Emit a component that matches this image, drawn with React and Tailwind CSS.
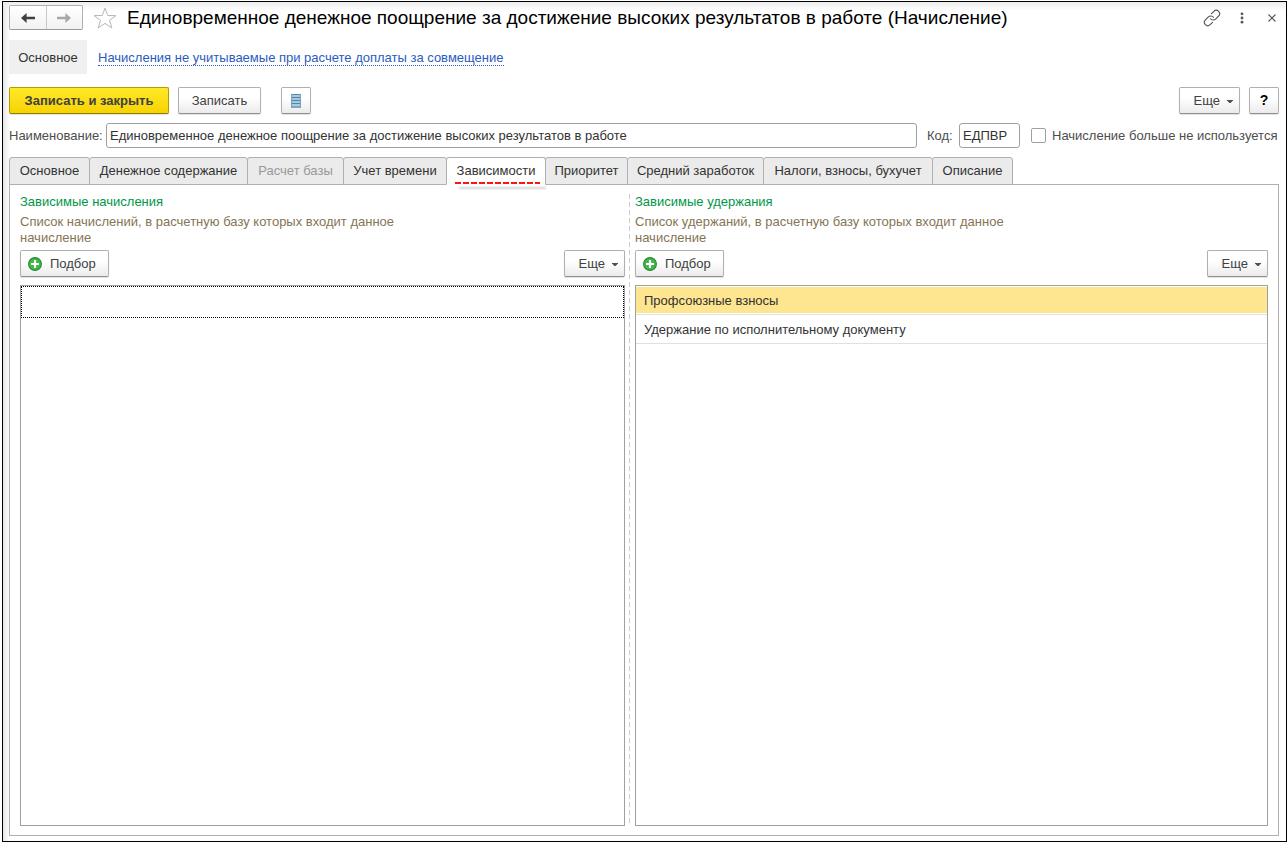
import { useState } from "react";

const buttonBase =
  "flex h-[27px] shrink-0 items-center rounded-[2px] border border-[#b0b0b0] border-b-[#8f8f8f] bg-linear-to-b from-white from-40% to-[#ebebeb] text-[13px] text-[#404040] shadow-[0_1px_1px_rgba(0,0,0,0.12)]";

const tabs = [
  { label: "Основное", width: "w-[81px]" },
  { label: "Денежное содержание", width: "w-[159px]" },
  { label: "Расчет базы", width: "w-[97px]", disabled: true },
  { label: "Учет времени", width: "w-[104px]" },
  { label: "Зависимости", width: "w-[100px]" },
  { label: "Приоритет", width: "w-[83px]" },
  { label: "Средний заработок", width: "w-[137px]" },
  { label: "Налоги, взносы, бухучет", width: "w-[170px]" },
  { label: "Описание", width: "w-[81px]" },
];

function Arrow({ className, flip }) {
  return (
    <svg viewBox="0 0 14 10" className={`h-[10px] w-[14px] ${className}`} aria-hidden="true">
      <path
        d="M0 5 L5.6 0 L5.6 3.8 L14 3.8 L14 6.2 L5.6 6.2 L5.6 10 Z"
        fill="currentColor"
        transform={flip ? "translate(14 0) scale(-1 1)" : undefined}
      />
    </svg>
  );
}

function MoreButton() {
  return (
    <button type="button" className={`${buttonBase} w-[61px] justify-end gap-[7px] pr-[6px]`}>
      Еще
      <svg viewBox="0 0 6 3" className="mt-px h-[3px] w-[6px]" aria-hidden="true">
        <path d="M0 0 H6 V0.6 L3.6 3 H2.4 L0 0.6 Z" fill="#505050" />
      </svg>
    </button>
  );
}

function PickButton() {
  return (
    <button type="button" className={`${buttonBase} w-[89px] gap-2 pl-[7px]`}>
      <svg viewBox="0 0 14 14" className="size-[14px]" aria-hidden="true">
        <circle cx="7" cy="7" r="6.4" fill="#43b649" stroke="#258a35" strokeWidth="1.1" />
        <path d="M7 3 V11 M3 7 H11" stroke="#fff" strokeWidth="2.1" />
      </svg>
      Подбор
    </button>
  );
}

function Section({ title, hint, children }) {
  return (
    <section className="flex min-w-0 flex-1 flex-col">
      <h2 className="leading-4 text-[#009646]">{title}</h2>
      <p className="mt-1 max-w-[400px] leading-4 text-[#857554]">{hint}</p>
      <div className="mt-1 mb-2 flex justify-between">
        <PickButton />
        <MoreButton />
      </div>
      <ul className="flex-1 border border-[#a0a0a0] bg-white">{children}</ul>
    </section>
  );
}

export default function App() {
  const [active, setActive] = useState(4);
  const [selected, setSelected] = useState(0);
  const [name, setName] = useState("Единовременное денежное поощрение за достижение высоких результатов в работе");
  const [code, setCode] = useState("ЕДПВР");
  const [unused, setUnused] = useState(false);

  return (
    <div className="flex min-h-screen flex-col bg-white pt-px pl-[2px] font-['Liberation_Sans',Arial,sans-serif] text-[13px] text-[#333]">
      <main className="flex flex-1 flex-col border border-black bg-linear-to-r from-[#e6e6e6] to-white to-[7px]">
        <div className="flex flex-1 flex-col bg-linear-to-b from-[#ededed] to-transparent to-[9px] pt-[3px] pr-[7px] pb-[5px] pl-[6px]">
          <header className="flex h-[25px] items-center">
            <div className="flex h-[25px] w-[74px] shrink-0 rounded-[2px] border border-[#b0b0b0] border-b-[#999] bg-linear-to-b from-white to-[#f2f2f2]">
              <button type="button" aria-label="Назад" className="flex flex-1 items-center justify-center border-r border-[#c8c8c8]">
                <Arrow className="text-[#404040]" />
              </button>
              <button type="button" aria-label="Вперед" className="flex flex-1 items-center justify-center">
                <Arrow flip className="text-[#a8a8a8]" />
              </button>
            </div>
            <button type="button" aria-label="Избранное" className="ml-[10px] shrink-0">
              <svg viewBox="0 0 24 22" className="h-[22px] w-6" aria-hidden="true">
                <path d="M12 1.2 L14.8 8.5 L23 8.6 L16.5 13.4 L18.9 21 L12 16.4 L5.1 21 L7.5 13.4 L1 8.6 L9.2 8.5 Z" fill="#fff" stroke="#b4b8bc" />
              </svg>
            </button>
            <h1 className="ml-[10px] flex-1 text-[19px] leading-6 whitespace-nowrap text-black">
              Единовременное денежное поощрение за достижение высоких результатов в работе (Начисление)
            </h1>
            <div className="flex items-center text-[#555]">
              <button type="button" aria-label="Ссылка">
                <svg viewBox="0 0 24 24" className="size-[18px]" fill="none" stroke="currentColor" strokeWidth="1.5" strokeLinecap="round" aria-hidden="true">
                  <path d="M10 13 a4.6 4.6 0 0 0 6.8 0.4 l4-4 a4.4 4.4 0 0 0 -6.3 -6.3 l-3.2 3.2" />
                  <path d="M14 11 a4.6 4.6 0 0 0 -6.8 -0.4 l-4 4 a4.4 4.4 0 0 0 6.3 6.3 l3.2 -3.2" />
                </svg>
              </button>
              <button type="button" aria-label="Меню" className="ml-[19px]">
                <svg viewBox="0 0 4 12" className="h-3 w-1" fill="currentColor" aria-hidden="true">
                  <circle cx="2" cy="1.8" r="1.4" />
                  <circle cx="2" cy="6" r="1.4" />
                  <circle cx="2" cy="10.2" r="1.4" />
                </svg>
              </button>
              <button type="button" aria-label="Закрыть" className="mr-[3px] ml-6">
                <svg viewBox="0 0 8 8" className="size-2" stroke="currentColor" strokeWidth="1.1" aria-hidden="true">
                  <path d="M0.5 0.5 L7.5 7.5 M7.5 0.5 L0.5 7.5" />
                </svg>
              </button>
            </div>
          </header>

          <nav className="mt-[10px] flex h-[34px] items-center gap-[11px]">
            <span className="flex h-full w-[78px] items-center justify-center bg-[#f0f0f0] pt-px">Основное</span>
            <a href="#related" className="mt-[2px] border-b border-dotted border-[#2a5bc0] leading-[14px] text-[#2a5bc0]">
              Начисления не учитываемые при расчете доплаты за совмещение
            </a>
          </nav>

          <div className="mt-[13px] flex">
            <button
              type="button"
              className="h-[27px] w-[160px] rounded-[2px] border border-[#b39b00] border-b-[#8f7c00] bg-linear-to-b from-[#ffe924] to-[#f7d300] text-[13px] font-bold text-[#404040] shadow-[0_1px_1px_rgba(0,0,0,0.12)]"
            >
              Записать и закрыть
            </button>
            <button type="button" className={`${buttonBase} ml-[9px] w-[83px] justify-center`}>
              Записать
            </button>
            <button type="button" aria-label="Список" className={`${buttonBase} ml-5 w-[30px] justify-center`}>
              <svg viewBox="0 0 10 14" className="h-[14px] w-[10px]" aria-hidden="true">
                <path d="M0 0 H10 V14 H0 Z" fill="#a9cbe2" />
                <path d="M0 0.5 H10 M0 3.5 H10 M0 6.5 H10 M0 9.5 H10 M0 13 H10" stroke="#5583a6" />
                <path d="M0.5 0 V14 M9.5 0 V14" stroke="#7ba3c0" />
              </svg>
            </button>
            <div className="ml-auto flex gap-[9px]">
              <MoreButton />
              <button type="button" className={`${buttonBase} w-[30px] justify-center text-[14px] font-bold text-black`}>
                ?
              </button>
            </div>
          </div>

          <div className="mt-[9px] flex h-[25px] items-center text-[#4d4d4d]">
            <label htmlFor="name" className="w-[97px] shrink-0">Наименование:</label>
            <input
              id="name"
              value={name}
              onChange={(e) => setName(e.target.value)}
              className="h-full min-w-0 flex-1 rounded-[3px] border border-[#a0a0a0] bg-white px-[3px] text-[#333] outline-none"
            />
            <label htmlFor="code" className="ml-[10px] w-8 shrink-0">Код:</label>
            <input
              id="code"
              value={code}
              onChange={(e) => setCode(e.target.value)}
              className="h-full w-[61px] rounded-[3px] border border-[#a0a0a0] bg-white px-[3px] text-[#333] outline-none"
            />
            <label className="ml-[11px] flex w-[248px] shrink-0 items-center gap-[6px] whitespace-nowrap">
              <input
                type="checkbox"
                checked={unused}
                onChange={(e) => setUnused(e.target.checked)}
                className="size-[15px] appearance-none rounded-[2px] border border-[#a0a0a0] bg-white checked:bg-[#666]"
              />
              Начисление больше не используется
            </label>
          </div>

          <div role="tablist" className="relative z-10 mt-[9px] -mb-px flex h-7">
            {tabs.map((tab, i) => (
              <button
                key={tab.label}
                type="button"
                role="tab"
                aria-selected={active === i}
                disabled={tab.disabled}
                onClick={() => setActive(i)}
                className={`relative -mr-px shrink-0 rounded-t-[3px] border border-[#b0b0b0] whitespace-nowrap ${tab.width} ${
                  active === i ? "border-b-white bg-white" : "bg-[#ebebeb]"
                } ${tab.disabled ? "text-[#999]" : "text-[#333]"}`}
              >
                {tab.label}
                {active === i && (
                  <svg viewBox="0 0 92 10" className="absolute top-[22px] left-2 h-[10px] w-[92px]" aria-hidden="true">
                    <path d="M5 8 H90" stroke="#f0f0f0" strokeWidth="4" strokeLinecap="round" />
                    <path d="M6 8 H89" stroke="#e2e2e2" strokeWidth="2" strokeLinecap="round" />
                    <path d="M0 3 H85" stroke="#ff1414" strokeWidth="2" strokeDasharray="6 2" />
                  </svg>
                )}
              </button>
            ))}
          </div>

          <div className="flex flex-1 border border-[#b0b0b0] bg-white px-[10px] pt-[9px] pb-[9px]">
            <div className="flex flex-[605]">
              <Section title="Зависимые начисления" hint="Список начислений, в расчетную базу которых входит данное начисление">
                <li tabIndex={0} className="h-8 border border-dotted border-black" />
              </Section>
            </div>
            <div className="mr-[5px] ml-1 w-px bg-[repeating-linear-gradient(to_bottom,#ccc_0_5px,transparent_5px_8px)]" />
            <div className="flex flex-[633]">
              <Section title="Зависимые удержания" hint="Список удержаний, в расчетную базу которых входит данное начисление">
                {["Профсоюзные взносы", "Удержание по исполнительному документу"].map((item, i) => (
                  <li key={item} className="border-b border-[#e0e0e0] py-px">
                    <button
                      type="button"
                      onClick={() => setSelected(i)}
                      className={`flex h-[26px] w-full items-center px-2 pt-[2px] text-left ${selected === i ? "bg-[#fee590]" : ""}`}
                    >
                      {item}
                    </button>
                  </li>
                ))}
              </Section>
            </div>
          </div>
        </div>
      </main>
    </div>
  );
}
